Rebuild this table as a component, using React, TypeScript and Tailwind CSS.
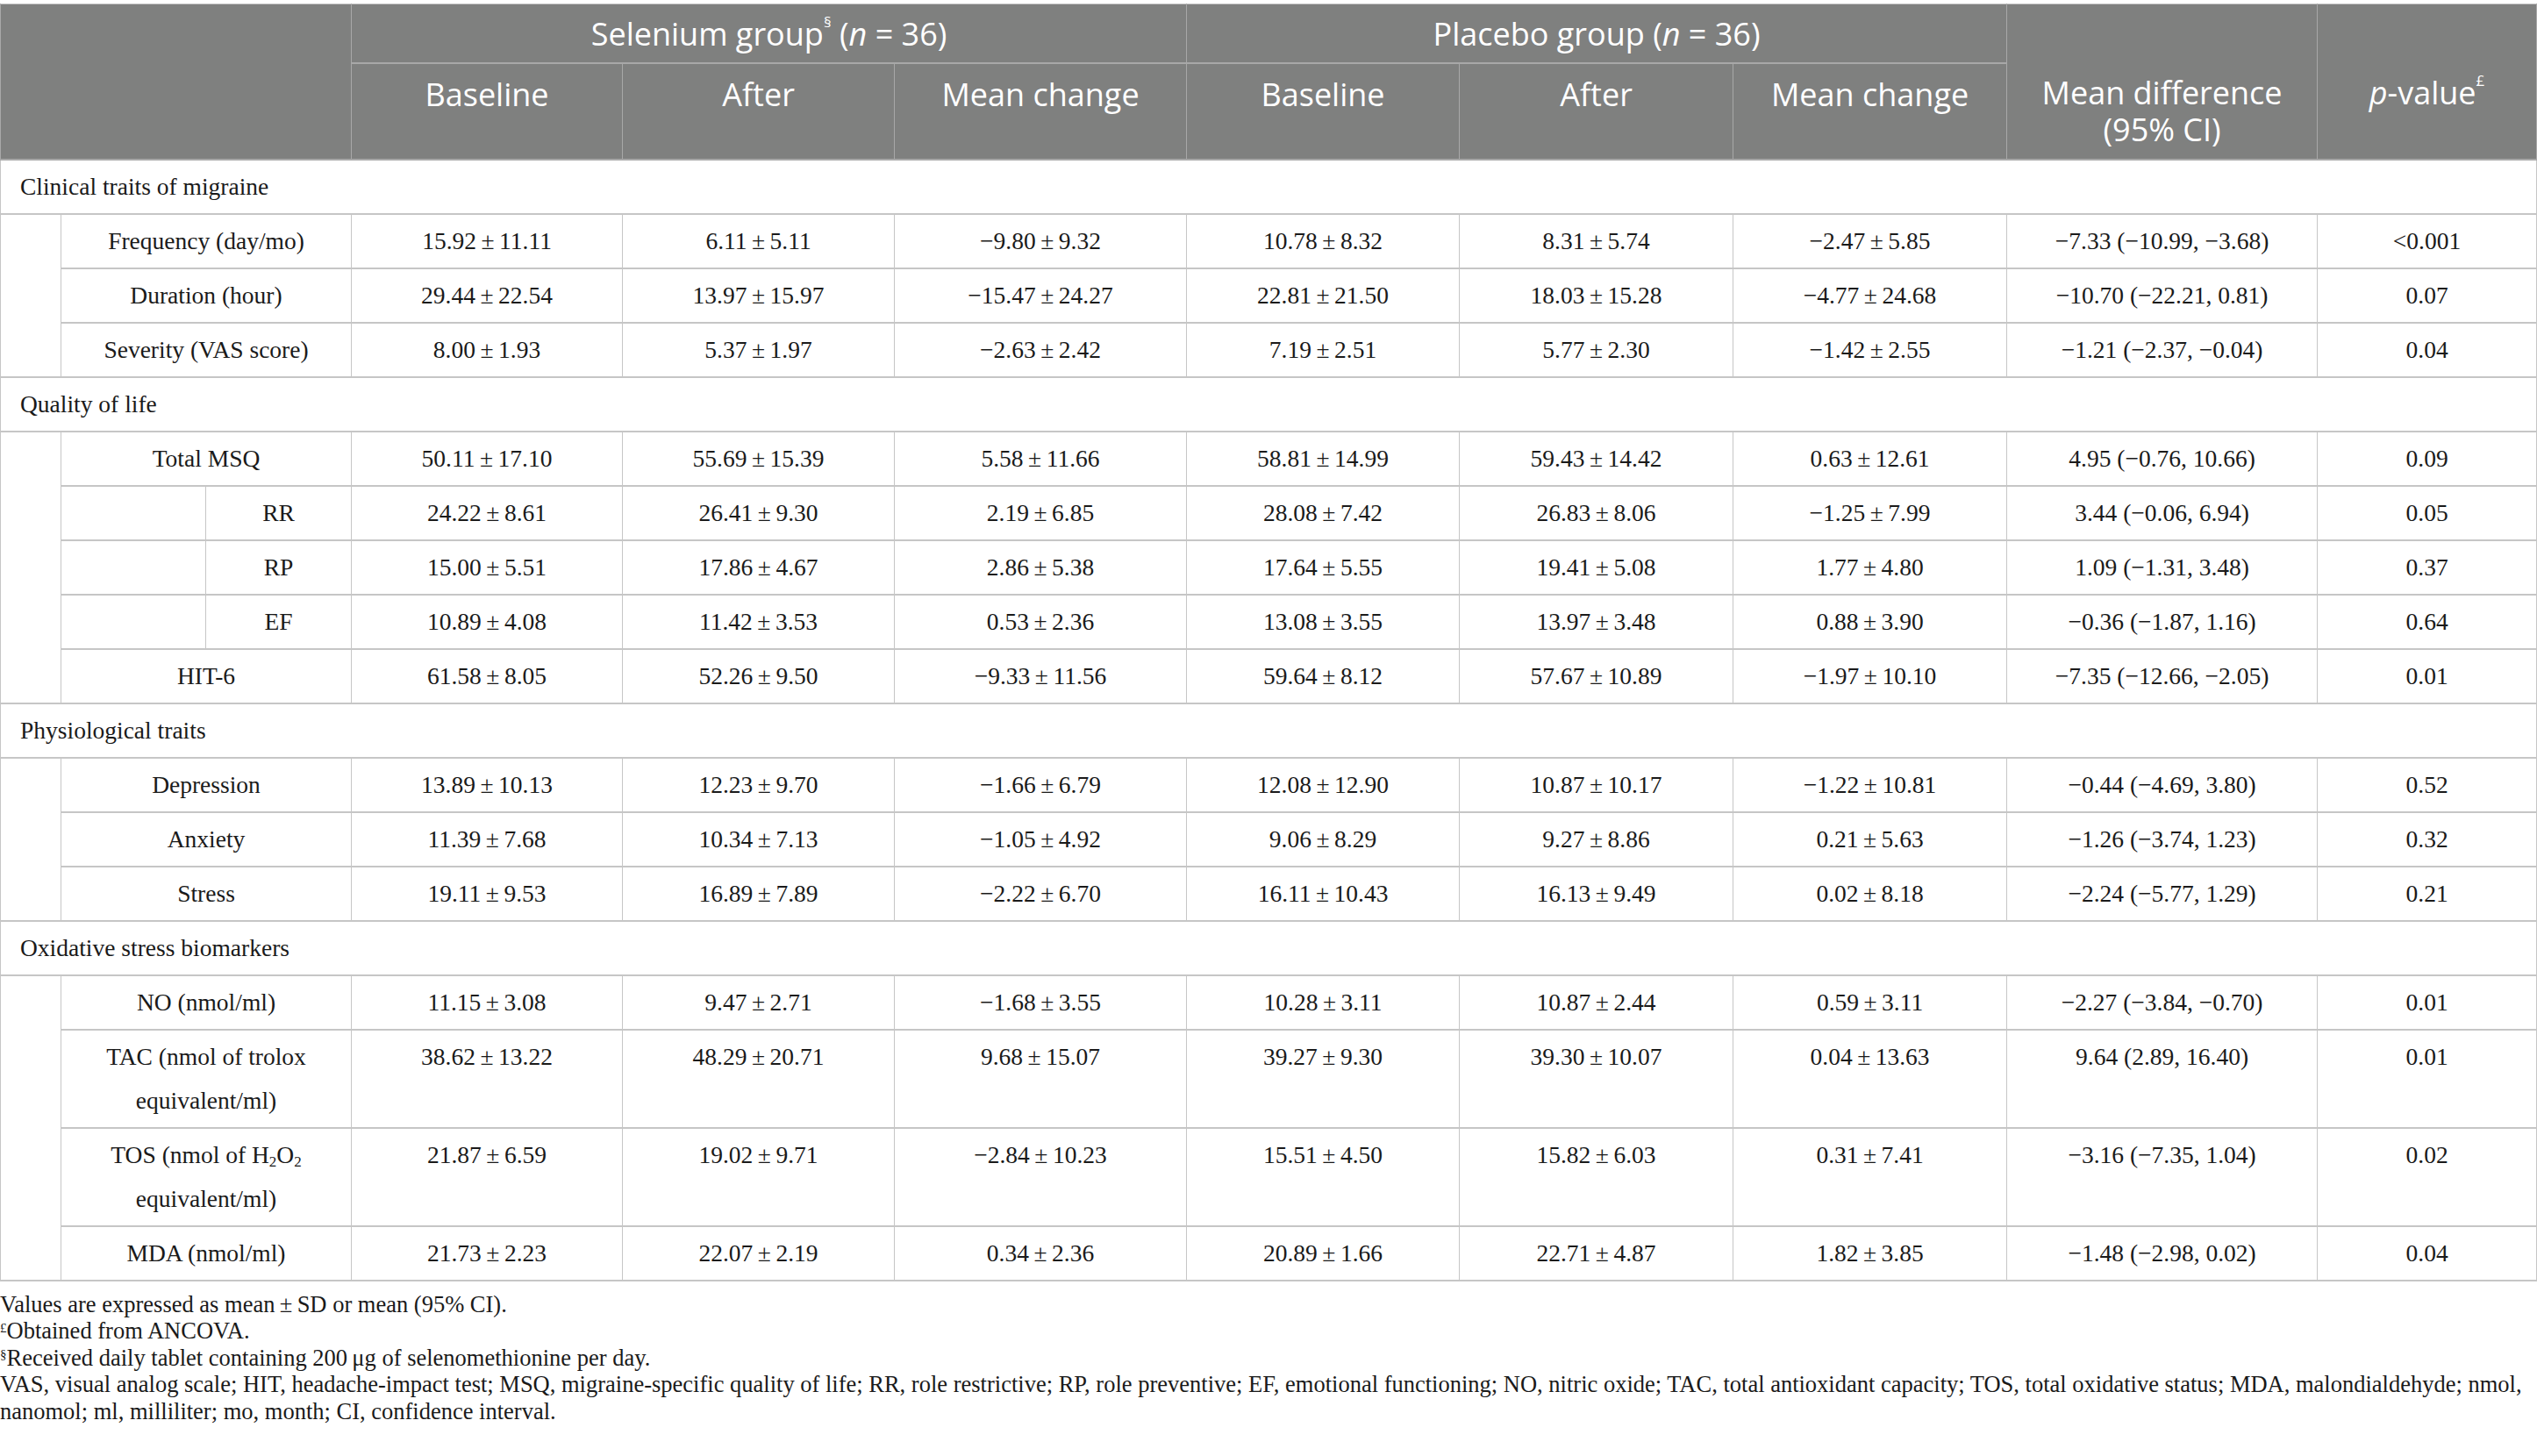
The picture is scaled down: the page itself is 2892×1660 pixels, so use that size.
import React from "react";

// Tabla de resultados: selenio vs placebo
const GROUPS = [
  {
    title: "Clinical traits of migraine",
    rows: [
      { label: "Frequency (day/mo)", v: ["15.92±11.11", "6.11±5.11", "−9.80±9.32", "10.78±8.32", "8.31±5.74", "−2.47±5.85", "−7.33 (−10.99, −3.68)", "<0.001"] },
      { label: "Duration (hour)", v: ["29.44±22.54", "13.97±15.97", "−15.47±24.27", "22.81±21.50", "18.03±15.28", "−4.77±24.68", "−10.70 (−22.21, 0.81)", "0.07"] },
      { label: "Severity (VAS score)", v: ["8.00±1.93", "5.37±1.97", "−2.63±2.42", "7.19±2.51", "5.77±2.30", "−1.42±2.55", "−1.21 (−2.37, −0.04)", "0.04"] },
    ],
  },
  {
    title: "Quality of life",
    rows: [
      { label: "Total MSQ", v: ["50.11±17.10", "55.69±15.39", "5.58±11.66", "58.81±14.99", "59.43±14.42", "0.63±12.61", "4.95 (−0.76, 10.66)", "0.09"] },
      { label: "RR", sub: true, v: ["24.22±8.61", "26.41±9.30", "2.19±6.85", "28.08±7.42", "26.83±8.06", "−1.25±7.99", "3.44 (−0.06, 6.94)", "0.05"] },
      { label: "RP", sub: true, v: ["15.00±5.51", "17.86±4.67", "2.86±5.38", "17.64±5.55", "19.41±5.08", "1.77±4.80", "1.09 (−1.31, 3.48)", "0.37"] },
      { label: "EF", sub: true, v: ["10.89±4.08", "11.42±3.53", "0.53±2.36", "13.08±3.55", "13.97±3.48", "0.88±3.90", "−0.36 (−1.87, 1.16)", "0.64"] },
      { label: "HIT-6", v: ["61.58±8.05", "52.26±9.50", "−9.33±11.56", "59.64±8.12", "57.67±10.89", "−1.97±10.10", "−7.35 (−12.66, −2.05)", "0.01"] },
    ],
  },
  {
    title: "Physiological traits",
    rows: [
      { label: "Depression", v: ["13.89±10.13", "12.23±9.70", "−1.66±6.79", "12.08±12.90", "10.87±10.17", "−1.22±10.81", "−0.44 (−4.69, 3.80)", "0.52"] },
      { label: "Anxiety", v: ["11.39±7.68", "10.34±7.13", "−1.05±4.92", "9.06±8.29", "9.27±8.86", "0.21±5.63", "−1.26 (−3.74, 1.23)", "0.32"] },
      { label: "Stress", v: ["19.11±9.53", "16.89±7.89", "−2.22±6.70", "16.11±10.43", "16.13±9.49", "0.02±8.18", "−2.24 (−5.77, 1.29)", "0.21"] },
    ],
  },
  {
    title: "Oxidative stress biomarkers",
    rows: [
      { label: "NO (nmol/ml)", v: ["11.15±3.08", "9.47±2.71", "−1.68±3.55", "10.28±3.11", "10.87±2.44", "0.59±3.11", "−2.27 (−3.84, −0.70)", "0.01"] },
      { label: "tac", v: ["38.62±13.22", "48.29±20.71", "9.68±15.07", "39.27±9.30", "39.30±10.07", "0.04±13.63", "9.64 (2.89, 16.40)", "0.01"] },
      { label: "tos", v: ["21.87±6.59", "19.02±9.71", "−2.84±10.23", "15.51±4.50", "15.82±6.03", "0.31±7.41", "−3.16 (−7.35, 1.04)", "0.02"] },
      { label: "MDA (nmol/ml)", v: ["21.73±2.23", "22.07±2.19", "0.34±2.36", "20.89±1.66", "22.71±4.87", "1.82±3.85", "−1.48 (−2.98, 0.02)", "0.04"] },
    ],
  },
];

const fmt = (s: string) => s.replace("±", "\u2009±\u2009");

function Label({ label }: { label: string }) {
  if (label === "tac")
    return (
      <>
        TAC (nmol of trolox
        <br />
        equivalent/ml)
      </>
    );
  if (label === "tos")
    return (
      <>
        TOS (nmol of H<sub className="text-[17px]">2</sub>O<sub className="text-[17px]">2</sub>
        <br />
        equivalent/ml)
      </>
    );
  return <>{label}</>;
}

const cell = "border-r border-b-2 border-[#c6c6c6] px-2 pt-[5px] pb-[5px] align-top text-center";
const head = "border-r border-b-2 border-[#a8a8a8] px-2 align-top text-center font-normal";

export default function App() {
  return (
    <div className="bg-white pt-[4px] text-[#1a1a1a]" style={{ width: 2892 }}>
      <table
        className="table-fixed border-collapse text-[27.5px] leading-[50px]"
        style={{ width: 2891, fontFamily: '"Liberation Serif", serif' }}
      >
        <colgroup>
          {[69, 165, 166, 309, 310, 333, 311, 312, 312, 354, 250].map((w, i) => (
            <col key={i} style={{ width: w }} />
          ))}
        </colgroup>
        <thead
          className="bg-[#7f807f] text-white text-[36px] leading-[42px]"
          style={{ fontFamily: '"Open Sans", sans-serif' }}
        >
          <tr className="h-[67px] border-t border-[#c6c6c6]">
            <th colSpan={3} rowSpan={2} className={`${head} border-l`} />
            <th colSpan={3} className={`${head} pt-[13px]`}>
              Selenium group<sup className="text-[17px] align-super">§</sup> (<i>n</i> = 36)
            </th>
            <th colSpan={3} className={`${head} pt-[13px]`}>
              Placebo group (<i>n</i> = 36)
            </th>
            <th rowSpan={2} className={`${head} pt-[80px]`}>
              Mean difference
              <br />
              (95% CI)
            </th>
            <th rowSpan={2} className={`${head} pt-[80px]`}>
              <i>p</i>-value<sup className="text-[17px] align-super">£</sup>
            </th>
          </tr>
          <tr className="h-[110px]">
            {["Baseline", "After", "Mean change", "Baseline", "After", "Mean change"].map((h, i) => (
              <th key={i} className={`${head} pt-[14px]`}>
                {h}
              </th>
            ))}
          </tr>
        </thead>
        <tbody>
          {GROUPS.map((g) => (
            <React.Fragment key={g.title}>
              <tr>
                <td
                  colSpan={11}
                  className="border-x border-b-2 border-[#c6c6c6] pl-[22px] pt-[5px] pb-[5px] text-left align-top"
                >
                  {g.title}
                </td>
              </tr>
              {g.rows.map((r, ri) => (
                <tr key={r.label}>
                  {ri === 0 && (
                    <td rowSpan={g.rows.length} className="border-l border-r border-b-2 border-[#c6c6c6]" />
                  )}
                  {r.sub ? (
                    <>
                      <td className={cell} />
                      <td className={cell}>{r.label}</td>
                    </>
                  ) : (
                    <td colSpan={2} className={cell}>
                      <Label label={r.label} />
                    </td>
                  )}
                  {r.v.map((v, i) => (
                    <td key={i} className={cell}>
                      {fmt(v)}
                    </td>
                  ))}
                </tr>
              ))}
            </React.Fragment>
          ))}
        </tbody>
      </table>

      <div
        className="mt-[11px] text-[26.5px] leading-[30.5px] text-[#1a1a1a]"
        style={{ fontFamily: '"Liberation Serif", serif' }}
      >
        <p>Values are expressed as mean{"\u2009"}±{"\u2009"}SD or mean (95% CI).</p>
        <p>
          <sup className="text-[15px]">£</sup>Obtained from ANCOVA.
        </p>
        <p>
          <sup className="text-[15px]">§</sup>Received daily tablet containing 200{"\u2009"}μg of selenomethionine per day.
        </p>
        <p>
          VAS, visual analog scale; HIT, headache-impact test; MSQ, migraine-specific quality of life; RR, role
          restrictive; RP, role preventive; EF, emotional functioning; NO, nitric oxide; TAC, total antioxidant
          capacity; TOS, total oxidative status; MDA, malondialdehyde; nmol,
          <br />
          nanomol; ml, milliliter; mo, month; CI, confidence interval.
        </p>
      </div>
    </div>
  );
}
